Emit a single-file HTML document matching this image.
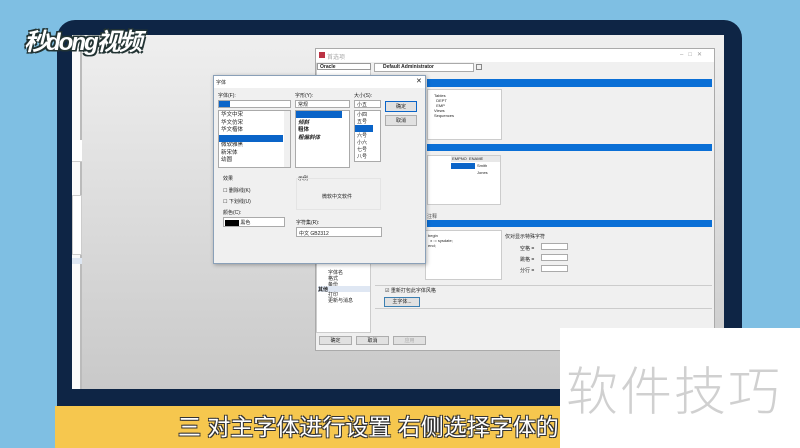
<!DOCTYPE html>
<html><head><meta charset="utf-8"><style>
*{margin:0;padding:0;box-sizing:border-box}
body{width:800px;height:448px;overflow:hidden;background:#7fbfe3;position:relative;font-family:"Liberation Sans","Noto Sans CJK SC",sans-serif;font-size:6px;color:#222}
.a{position:absolute}
.fr{left:57px;top:20px;width:685px;height:392px;background:#0e2545;border-radius:18px 18px 0 0}
.scr{left:72px;top:35px;width:652px;height:354px;background:linear-gradient(#efefef,#c9c9c9)}
.box{background:#fff;border:1px solid #aaa}
.sel{background:#0a64c8;color:#fff}
.btn{background:#e1e1e1;border:1px solid #adadad;text-align:center;line-height:9px;font-size:5px}
.blue{background:#0a6fd6}
</style></head><body>
<div class="a fr"></div>
<div class="a scr"></div>
<div class="a" style="left:72px;top:35px;width:10px;height:354px;background:#fafafa;border-right:2px solid #bbb"></div>
<div class="a" style="left:72px;top:140px;width:10px;height:22px;background:#fff;border-bottom:1px solid #ccc"></div>
<div class="a" style="left:72px;top:195px;width:10px;height:60px;background:#fff;border:1px solid #ccc"></div>
<div class="a" style="left:72px;top:258px;width:10px;height:6px;background:#dde6f2"></div>

<!-- main window -->
<div class="a" style="left:315px;top:48px;width:400px;height:303px;background:#f0f0f0;border:1px solid #aaa"></div>
<div class="a" style="left:316px;top:49px;width:398px;height:13px;background:#fff"></div>
<div class="a" style="left:319px;top:52px;width:6px;height:6px;background:#b34"></div>
<div class="a" style="left:327px;top:52px;color:#aaa">首选项</div>
<div class="a" style="left:680px;top:51px;color:#999">–&nbsp;&nbsp;&nbsp;□&nbsp;&nbsp;&nbsp;✕</div>
<div class="a box" style="left:316px;top:63px;width:55px;height:270px;border-color:#ccc"></div>
<div class="a" style="left:317px;top:63px;width:54px;height:7px;background:#fff;border:1px solid #999;font-weight:bold;padding-left:2px;font-size:5px">Oracle</div>
<div class="a" style="left:328px;top:270px;font-size:5px;line-height:6px">字体名<br>格式<br>备份<br>HTML/XML</div>
<div class="a" style="left:318px;top:286px;width:52px;height:6px;background:#dfe7f3;font-weight:bold;font-size:5px">其他</div>
<div class="a" style="left:328px;top:292px;font-size:5px;line-height:6px">打印<br>更新与消息</div>
<div class="a box" style="left:374px;top:63px;width:100px;height:9px;font-size:5px;padding-left:8px;font-weight:bold">Default Administrator</div>
<div class="a" style="left:476px;top:64px;width:6px;height:6px;border:1px solid #888"></div>
<div class="a blue" style="left:427px;top:79px;width:285px;height:8px"></div>
<div class="a box" style="left:427px;top:89px;width:75px;height:51px;border-color:#ccc;font-size:4px;padding:3px 6px;line-height:5px">Tables<br>&nbsp;&nbsp;DEPT<br>&nbsp;&nbsp;EMP<br>Views<br>Sequences</div>
<div class="a blue" style="left:427px;top:144px;width:285px;height:7px"></div>
<div class="a box" style="left:427px;top:155px;width:74px;height:50px;border-color:#ccc"></div>
<div class="a" style="left:451px;top:156px;width:49px;height:6px;background:#e8e8e8;font-size:4px">&nbsp;EMPNO&nbsp;&nbsp;ENAME</div>
<div class="a sel" style="left:451px;top:163px;width:24px;height:6px"></div>
<div class="a" style="left:477px;top:163px;font-size:4px">Smith</div>
<div class="a" style="left:477px;top:170px;font-size:4px">Jones</div>
<div class="a" style="left:427px;top:213px;font-size:5px;color:#555">注释</div>
<div class="a blue" style="left:427px;top:220px;width:285px;height:7px"></div>
<div class="a box" style="left:425px;top:230px;width:77px;height:50px;border-color:#ccc;font-size:4px;padding:2px;line-height:5px">begin<br>&nbsp;&nbsp;x := sysdate;<br>end;</div>
<div class="a" style="left:505px;top:233px;font-size:5px">仅对显示特殊字符</div>
<div class="a" style="left:520px;top:244px;font-size:5px;line-height:11px">空格 =<br>跳格 =<br>分行 =</div>
<div class="a box" style="left:541px;top:243px;width:27px;height:7px"></div>
<div class="a box" style="left:541px;top:254px;width:27px;height:7px"></div>
<div class="a box" style="left:541px;top:265px;width:27px;height:7px"></div>
<div class="a" style="left:375px;top:285px;width:337px;height:1px;background:#ccc"></div>
<div class="a" style="left:385px;top:287px;font-size:5px">☑ 重新打包此字体风格</div>
<div class="a btn" style="left:384px;top:297px;width:36px;height:10px;border-color:#3c7fb1">主字体...</div>
<div class="a" style="left:375px;top:308px;width:337px;height:1px;background:#ccc"></div>
<div class="a btn" style="left:319px;top:336px;width:33px;height:9px">确定</div>
<div class="a btn" style="left:356px;top:336px;width:33px;height:9px">取消</div>
<div class="a btn" style="left:393px;top:336px;width:33px;height:9px;color:#aaa">应用</div>

<!-- font dialog -->
<div class="a" style="left:213px;top:75px;width:213px;height:189px;background:#f0f0f0;border:1px solid #8aa0b8;box-shadow:1px 1px 4px rgba(0,0,0,.3)"></div>
<div class="a" style="left:214px;top:76px;width:211px;height:12px;background:#fff;font-size:5px;padding:3px 2px">字体</div>
<div class="a" style="left:416px;top:77px;font-size:7px">✕</div>
<div class="a" style="left:218px;top:92px;font-size:5px">字体(F):</div>
<div class="a" style="left:295px;top:92px;font-size:5px">字形(Y):</div>
<div class="a" style="left:354px;top:92px;font-size:5px">大小(S):</div>
<div class="a box" style="left:218px;top:100px;width:73px;height:8px"></div>
<div class="a sel" style="left:219px;top:101px;width:11px;height:6px"></div>
<div class="a box" style="left:218px;top:110px;width:73px;height:58px;font-size:5.5px;line-height:7.5px;padding:1px 2px">华文中宋<br>华文仿宋<br>华文楷体<br>&nbsp;<br>微软雅黑<br>新宋体<br>幼圆</div>
<div class="a sel" style="left:219px;top:135px;width:64px;height:7px"></div>
<div class="a" style="left:284px;top:111px;width:6px;height:56px;background:#f0f0f0"></div>
<div class="a box" style="left:295px;top:100px;width:55px;height:8px;font-size:5px;padding-left:2px">常规</div>
<div class="a box" style="left:295px;top:110px;width:55px;height:58px;font-size:5.5px;line-height:7.5px;padding:1px 2px;font-weight:bold"><br><i>倾斜</i><br>粗体<br><i>粗偏斜体</i></div>
<div class="a sel" style="left:296px;top:111px;width:46px;height:7px"></div>
<div class="a box" style="left:354px;top:100px;width:27px;height:8px;font-size:5px;padding-left:2px">小五</div>
<div class="a box" style="left:354px;top:110px;width:27px;height:52px;font-size:5px;line-height:7px;padding:1px 2px">小四<br>五号<br><br>六号<br>小六<br>七号<br>八号</div>
<div class="a sel" style="left:355px;top:125px;width:18px;height:7px"></div>
<div class="a btn" style="left:385px;top:101px;width:32px;height:11px;border-color:#0a64c8;line-height:10px">确定</div>
<div class="a btn" style="left:385px;top:115px;width:32px;height:11px;line-height:10px">取消</div>
<div class="a" style="left:223px;top:175px;font-size:5px">效果</div>
<div class="a" style="left:223px;top:187px;font-size:5px">☐ 删除线(K)</div>
<div class="a" style="left:223px;top:198px;font-size:5px">☐ 下划线(U)</div>
<div class="a" style="left:223px;top:209px;font-size:5px">颜色(C):</div>
<div class="a box" style="left:223px;top:217px;width:62px;height:10px;font-size:5px;padding:1px"><span style="display:inline-block;width:14px;height:6px;background:#000;vertical-align:middle"></span> 黑色</div>
<div class="a" style="left:298px;top:175px;font-size:5px">示例</div>
<div class="a" style="left:296px;top:178px;width:85px;height:32px;border:1px solid #e4e4e4"></div>
<div class="a" style="left:322px;top:193px;font-size:5px">微软中文软件</div>
<div class="a" style="left:296px;top:219px;font-size:5px">字符集(R):</div>
<div class="a box" style="left:296px;top:227px;width:86px;height:10px;font-size:5px;padding:2px">中文 GB2312</div>

<!-- bottom -->
<div class="a" style="left:55px;top:406px;width:510px;height:42px;background:#f6c74e"></div>
<div class="a" style="left:178px;top:408px;font-size:23px;color:#fff;white-space:nowrap;text-shadow:-1px -1px 0 #333,1px -1px 0 #333,-1px 1px 0 #333,1px 1px 0 #333">三 对主字体进行设置 右侧选择字体的</div>
<div class="a" style="left:560px;top:328px;width:240px;height:120px;background:#fff"></div>
<div class="a" style="left:566px;top:350px;font-size:52px;color:#d0d0d0;white-space:nowrap;font-weight:300;letter-spacing:2px">软件技巧</div>
<div class="a" style="left:24px;top:22px;font-size:24px;font-style:italic;font-weight:bold;color:#fff;white-space:nowrap;letter-spacing:-2px;text-shadow:-1.5px -1.5px 0 #233,1.5px -1.5px 0 #233,-1.5px 1.5px 0 #233,1.5px 1.5px 0 #233">秒dong视频</div>
</body></html>
